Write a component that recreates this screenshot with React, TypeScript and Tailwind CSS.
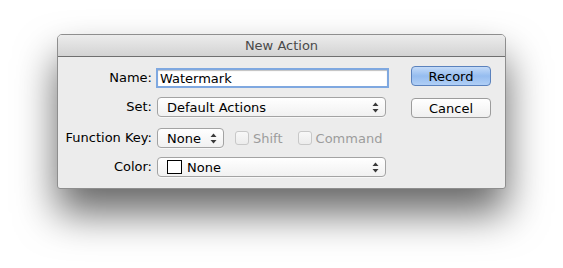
import React from "react";

const font = { fontFamily: '"Lucida Grande", "DejaVu Sans", sans-serif' };

function Arrows() {
  return (
    <svg width="7" height="11" viewBox="0 0 7 11" className="shrink-0">
      <path d="M3.5 0.5 L6.5 4 L0.5 4 Z" fill="#3a3a3a" />
      <path d="M3.5 10.5 L6.5 7 L0.5 7 Z" fill="#3a3a3a" />
    </svg>
  );
}

function Popup({ children, className }: { children: React.ReactNode; className: string }) {
  return (
    <div
      className={`flex h-[20px] items-center justify-between rounded-[4px] border border-[#a3a3a3] bg-gradient-to-b from-[#ffffff] to-[#f1f1f1] pl-[9px] pr-[6px] shadow-[0_1px_0_rgba(255,255,255,0.6)] ${className}`}
    >
      <div className="flex items-center gap-[5px] text-[13px] leading-none text-black">{children}</div>
      <Arrows />
    </div>
  );
}

function Check({ label }: { label: string }) {
  return (
    <div className="flex items-center gap-[4px]">
      <div className="h-[14px] w-[14px] rounded-[3px] border border-[#c8c8c8] bg-gradient-to-b from-[#f8f8f8] to-[#ececec]" />
      <span className="text-[13px] leading-none text-[#9c9c9c]">{label}</span>
    </div>
  );
}

export default function App() {
  return (
    <div className="min-h-[268px] w-[563px] bg-white pl-[57px] pt-[34px]" style={font}>
      <div className="flex h-[155px] w-[449px] flex-col overflow-hidden rounded-t-[5px] rounded-b-[3px] border border-[#8e8e8e] bg-[#ececec] shadow-[0_24px_40px_rgba(0,0,0,0.6)]">
        <div className="flex h-[22px] shrink-0 items-center justify-center border-b border-[#6f6f6f] bg-gradient-to-b from-[#ececec] to-[#d3d3d3]">
          <span className="text-[13px] leading-none text-[#4a4a4a]">New Action</span>
        </div>
        <div className="flex flex-1">
          <div className="flex flex-col pt-[11px]">
            <div className="flex h-[20px] items-center">
              <div className="w-[99px] pr-[5px] text-right text-[13px] text-black">Name:</div>
              <div className="-ml-[1px] flex h-[20px] w-[233px] items-center border-2 border-[#7fa8e0] bg-white pl-[2px] shadow-[inset_0_1px_1px_rgba(0,0,0,0.25)]">
                <span className="text-[13px] leading-none text-black">Watermark</span>
              </div>
            </div>
            <div className="mt-[9px] flex h-[20px] items-center">
              <div className="w-[99px] pr-[5px] text-right text-[13px] text-black">Set:</div>
              <Popup className="w-[229px]">Default Actions</Popup>
            </div>
            <div className="mt-[11px] flex h-[20px] items-center">
              <div className="w-[99px] pr-[5px] text-right text-[13px] text-black">Function Key:</div>
              <Popup className="w-[67px]">None</Popup>
              <div className="ml-[11px] flex items-center gap-[15px]">
                <Check label="Shift" />
                <Check label="Command" />
              </div>
            </div>
            <div className="mt-[9px] flex h-[20px] items-center">
              <div className="w-[99px] pr-[5px] text-right text-[13px] text-black">Color:</div>
              <Popup className="w-[229px]">
                <span className="h-[14px] w-[15px] border border-black bg-white" />
                <span>None</span>
              </Popup>
            </div>
          </div>
          <div className="ml-auto flex flex-col pr-[14px] pt-[9px]">
            <div className="flex h-[20px] w-[80px] items-center justify-center rounded-[4px] border border-[#5b82bd] bg-gradient-to-b from-[#c4dbf8] via-[#95bcef] to-[#b0cff6] text-[13px] leading-none text-black">
              Record
            </div>
            <div className="mt-[12px] flex h-[20px] w-[80px] items-center justify-center rounded-[4px] border border-[#9c9c9c] bg-gradient-to-b from-[#ffffff] to-[#f0f0f0] text-[13px] leading-none text-black">
              Cancel
            </div>
          </div>
        </div>
      </div>
    </div>
  );
}
